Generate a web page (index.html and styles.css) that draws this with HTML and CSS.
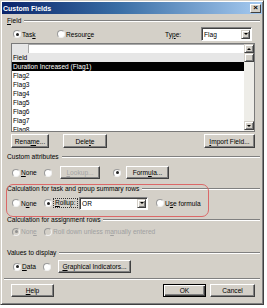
FILE: index.html
```html
<!DOCTYPE html>
<html lang="en">
<head>
  <meta charset="UTF-8" />
  <title>Custom Fields</title>
  <link rel="stylesheet" href="styles.css">
</head>
<body>

  <div class="window">
    <div class="titlebar">
      <span class="title">Custom Fields</span>
      <span class="close">×</span>
    </div>

    <div class="content">
      <div class="legend legend-field"><span><u>F</u>ield</span></div>

      <div class="row row-type">
        <label class="opt opt-task"><span class="radio on"></span><span>Tas<u>k</u></span></label>
        <label class="opt opt-grow"><span class="radio"></span><span>Resour<u>c</u>e</span></label>
        <span class="type-label">Ty<u>p</u>e:</span>
        <div class="combo combo-type"><span class="combo-text">Flag</span><span class="drop"></span></div>
      </div>

      <div class="listbox">
        <div class="list-main">
          <div class="list-top"><div class="list-edit"></div></div>
          <div class="list-head">Field</div>
          <div class="item sel">Duration Increased (Flag1)</div>
          <div class="item">Flag2</div>
          <div class="item">Flag3</div>
          <div class="item">Flag4</div>
          <div class="item">Flag5</div>
          <div class="item">Flag6</div>
          <div class="item">Flag7</div>
          <div class="item item-last">Flag8</div>
        </div>
        <div class="scrollbar">
          <div class="sb-btn sb-up"></div>
          <div class="sb-btn"></div>
          <div class="sb-track"></div>
          <div class="sb-btn sb-down"></div>
        </div>
      </div>

      <div class="row row-listbtns">
        <div class="btn btn-rename">Rena<u>m</u>e...</div>
        <div class="btn btn-delete">Dele<u>t</u>e</div>
        <div class="spacer"></div>
        <div class="btn btn-import"><u>I</u>mport Field...</div>
      </div>

      <div class="legend legend-attr"><span>Custom attributes</span></div>
      <div class="row row-attr">
        <label class="opt opt-none"><span class="radio"></span><span><u>N</u>one</span></label>
        <label class="opt opt-solo"><span class="radio"></span></label>
        <div class="btn btn-lookup disabled"><u>L</u>ookup...</div>
        <label class="opt opt-solo2"><span class="radio on"></span></label>
        <div class="btn btn-formula">Form<u>u</u>la...</div>
      </div>

      <div class="legend legend-calc"><span>Calculation for task and group summary rows</span></div>
      <div class="row row-calc">
        <label class="opt opt-none"><span class="radio"></span><span>N<u>o</u>ne</span></label>
        <label class="opt opt-rollup"><span class="radio on"></span><span class="focus"><u>R</u>ollup:</span></label>
        <div class="combo combo-rollup"><span class="combo-text">OR</span><span class="drop"></span></div>
        <label class="opt opt-formula"><span class="radio"></span><span>U<u>s</u>e formula</span></label>
      </div>

      <div class="legend legend-assign"><span>Calculation for assignment rows</span></div>
      <div class="row row-assign disabled">
        <label class="opt opt-none"><span class="radio on"></span><span>Non<u>e</u></span></label>
        <label class="opt"><span class="radio"></span><span>Roll down unless m<u>a</u>nually entered</span></label>
      </div>

      <div class="legend legend-values"><span>Values to display</span></div>
      <div class="row row-values">
        <label class="opt opt-data"><span class="radio on"></span><span><u>D</u>ata</span></label>
        <label class="opt opt-solo3"><span class="radio"></span></label>
        <div class="btn btn-graph"><u>G</u>raphical Indicators...</div>
      </div>

      <div class="sep"></div>

      <div class="row row-bottom">
        <div class="btn btn-help"><u>H</u>elp</div>
        <div class="spacer"></div>
        <div class="btn btn-ok default">OK</div>
        <div class="btn btn-cancel">Cancel</div>
      </div>
    </div>

    <!-- highlight drawn over the summary rows section -->
    <div class="annot"></div>
  </div>

</body>
</html>
```

FILE: styles.css
```css
* {
  box-sizing: border-box;
}
html, body {
  margin: 0;
  background: #fff;
}
body {
  font-family: "Liberation Sans", Arial, sans-serif;
  font-size: 6.6px;
  color: #000;
}
u {
  text-decoration-thickness: 0.5px;
}
.window {
  position: relative;
  width: 264px;
  height: 305px;
  padding: 1px;
  background: #D4D0C8;
  border: 1px solid;
  border-color: #D4D0C8 #404040 #404040 #D4D0C8;
  box-shadow: inset 1px 1px #fff, inset -1px -1px #808080;
  display: flex;
  flex-direction: column;
}
.titlebar {
  height: 12px;
  padding: 0 1px 0 1px;
  background: linear-gradient(to right, #0A246A, #3A6EA5 45%, #A6CAF0);
  display: flex;
  align-items: center;
  justify-content: space-between;
}
.title {
  color: #fff;
  font-weight: bold;
  font-size: 7px;
}
.close {
  width: 11px;
  height: 9px;
  background: #D4D0C8;
  border: 1px solid;
  border-color: #fff #404040 #404040 #fff;
  font-size: 8px;
  line-height: 6px;
  text-align: center;
  font-weight: bold;
}
.content {
  padding: 0 2px 0 5px;
  display: flex;
  flex-direction: column;
}

/* group headings with etched line */
.legend {
  display: flex;
  align-items: center;
  height: 9px;
  white-space: nowrap;
}
.legend::after {
  content: "";
  flex: 1;
  border-top: 1px solid #808080;
  border-bottom: 1px solid #fff;
  margin-left: 3px;
}
.legend-field { margin-top: 2px; }
.legend-attr { margin-top: 4px; }
.legend-calc { margin-top: 5px; }
.legend-assign { margin-top: 5px; }
.legend-values { margin-top: 12px; }

.row {
  display: flex;
  align-items: center;
  margin: 0 5px 0 4px;
  white-space: nowrap;
}
.spacer {
  flex: 1;
}
.opt {
  display: flex;
  align-items: center;
  gap: 1px;
}
.radio {
  width: 8px;
  height: 8px;
  border-radius: 50%;
  background: #fff;
  border: 1px solid;
  border-color: #9a9a9a #f0f0f0 #f0f0f0 #9a9a9a;
  display: flex;
  align-items: center;
  justify-content: center;
  flex: none;
}
.radio.on::after {
  content: "";
  width: 3px;
  height: 3px;
  border-radius: 50%;
  background: #222;
}
.disabled {
  color: #a0a0a0;
}
.disabled .radio {
  background: #D4D0C8;
}
.disabled .radio.on::after {
  background: #909090;
}

/* type row */
.row-type {
  height: 14px;
  margin-top: 2px;
  padding-left: 2px;
}
.opt-task { width: 44px; }
.opt-grow { flex: 1; }
.type-label { width: 36px; }
.combo {
  height: 13px;
  background: #fff;
  border: 1px solid;
  border-color: #808080 #fff #fff #808080;
  box-shadow: inset 1px 1px #404040;
  display: flex;
  align-items: center;
  padding: 1px 1px 1px 2px;
}
.combo-text {
  flex: 1;
}
.drop {
  width: 9px;
  height: 9px;
  background: #D4D0C8;
  border: 1px solid;
  border-color: #D4D0C8 #404040 #404040 #D4D0C8;
  box-shadow: inset 1px 1px #fff, inset -1px -1px #808080;
  display: flex;
  align-items: center;
  justify-content: center;
}
.drop::before {
  content: "";
  border-left: 2px solid transparent;
  border-right: 2px solid transparent;
  border-top: 2px solid #000;
}
.combo-type {
  width: 51px;
  height: 14px;
  margin-right: 3px;
}

/* field list */
.listbox {
  margin: 2px 5px 0 4px;
  height: 89px;
  background: #fff;
  border: 1px solid #7a7a7a;
  display: flex;
  overflow: hidden;
}
.list-main {
  flex: 1;
  overflow: hidden;
}
.list-top {
  height: 9px;
  padding-left: 16px;
  background: #E6E6E6;
}
.list-edit {
  height: 9px;
  background: #fff;
  border-top: 1px solid #a8a8a8;
  border-left: 1px solid #a8a8a8;
}
.list-head,
.item {
  height: 9px;
  line-height: 9px;
  padding-left: 1px;
}
.item-last {
  height: 6px;
  overflow: hidden;
}
.list-head {
  background: #E6E6E6;
}
.item.sel {
  background: #000;
  color: #fff;
}
.scrollbar {
  width: 10px;
  display: flex;
  flex-direction: column;
  background: #EEEDE8;
}
.sb-btn {
  height: 9px;
  background: #D4D0C8;
  border: 1px solid;
  border-color: #D4D0C8 #404040 #404040 #D4D0C8;
  box-shadow: inset 1px 1px #fff, inset -1px -1px #808080;
  display: flex;
  align-items: center;
  justify-content: center;
}
.sb-track {
  flex: 1;
}
.sb-down {
  margin-bottom: 1px;
}
.sb-up::before,
.sb-down::before {
  content: "";
  border-left: 2px solid transparent;
  border-right: 2px solid transparent;
}
.sb-up::before {
  border-bottom: 2px solid #000;
}
.sb-down::before {
  border-top: 2px solid #000;
}

/* buttons */
.btn {
  height: 13px;
  background: #D4D0C8;
  border: 1px solid;
  border-color: #fff #404040 #404040 #fff;
  box-shadow: inset -1px -1px #808080;
  display: flex;
  align-items: center;
  justify-content: center;
  flex: none;
}
.btn.default {
  border-color: #000;
  box-shadow: inset 1px 1px #fff, inset -1px -1px #404040, inset -2px -2px #808080;
}
.btn.disabled {
  color: #a4a4a4;
}
.row-listbtns {
  height: 14px;
  margin-top: 2px;
}
.row-listbtns .btn {
  height: 14px;
}
.btn-rename { width: 38px; }
.btn-delete { width: 44px; margin-left: 14px; }
.btn-import { width: 51px; }

/* custom attributes */
.row-attr {
  height: 13px;
  margin-top: 5px;
  padding-left: 1px;
}
.opt-none { width: 32px; }
.opt-solo { width: 16px; }
.btn-lookup { width: 40px; }
.opt-solo2 { width: 13px; margin-left: 13px; }
.btn-formula { width: 43px; }

/* summary rows */
.row-calc {
  height: 14px;
  margin-top: 3px;
  padding-left: 1px;
}
.opt-rollup { width: 35px; }
.focus {
  outline: 1px dotted #333;
  outline-offset: 0;
  padding: 0 1px;
  line-height: 8px;
  margin-left: 1px;
}
.combo-rollup {
  width: 69px;
}
.opt-formula {
  margin-left: 8px;
}

/* assignment rows */
.row-assign {
  height: 9px;
  margin-top: 3px;
  padding-left: 1px;
}

/* values */
.row-values {
  height: 13px;
  margin-top: 3px;
  padding-left: 2px;
}
.opt-data { width: 30px; }
.opt-solo3 { width: 15px; }
.btn-graph { width: 73px; }

.sep {
  margin: 5px 0 0 -3px;
  border-top: 1px solid #808080;
  border-bottom: 1px solid #fff;
}
.row-bottom {
  height: 13px;
  margin-top: 4px;
}
.btn-help { width: 43px; }
.btn-ok { width: 43px; }
.btn-cancel { width: 45px; margin-left: 4px; }

.annot {
  position: absolute;
  left: 5px;
  top: 183px;
  width: 203px;
  height: 33px;
  border: 1.5px solid #DB6868;
  border-radius: 7px;
}
```
